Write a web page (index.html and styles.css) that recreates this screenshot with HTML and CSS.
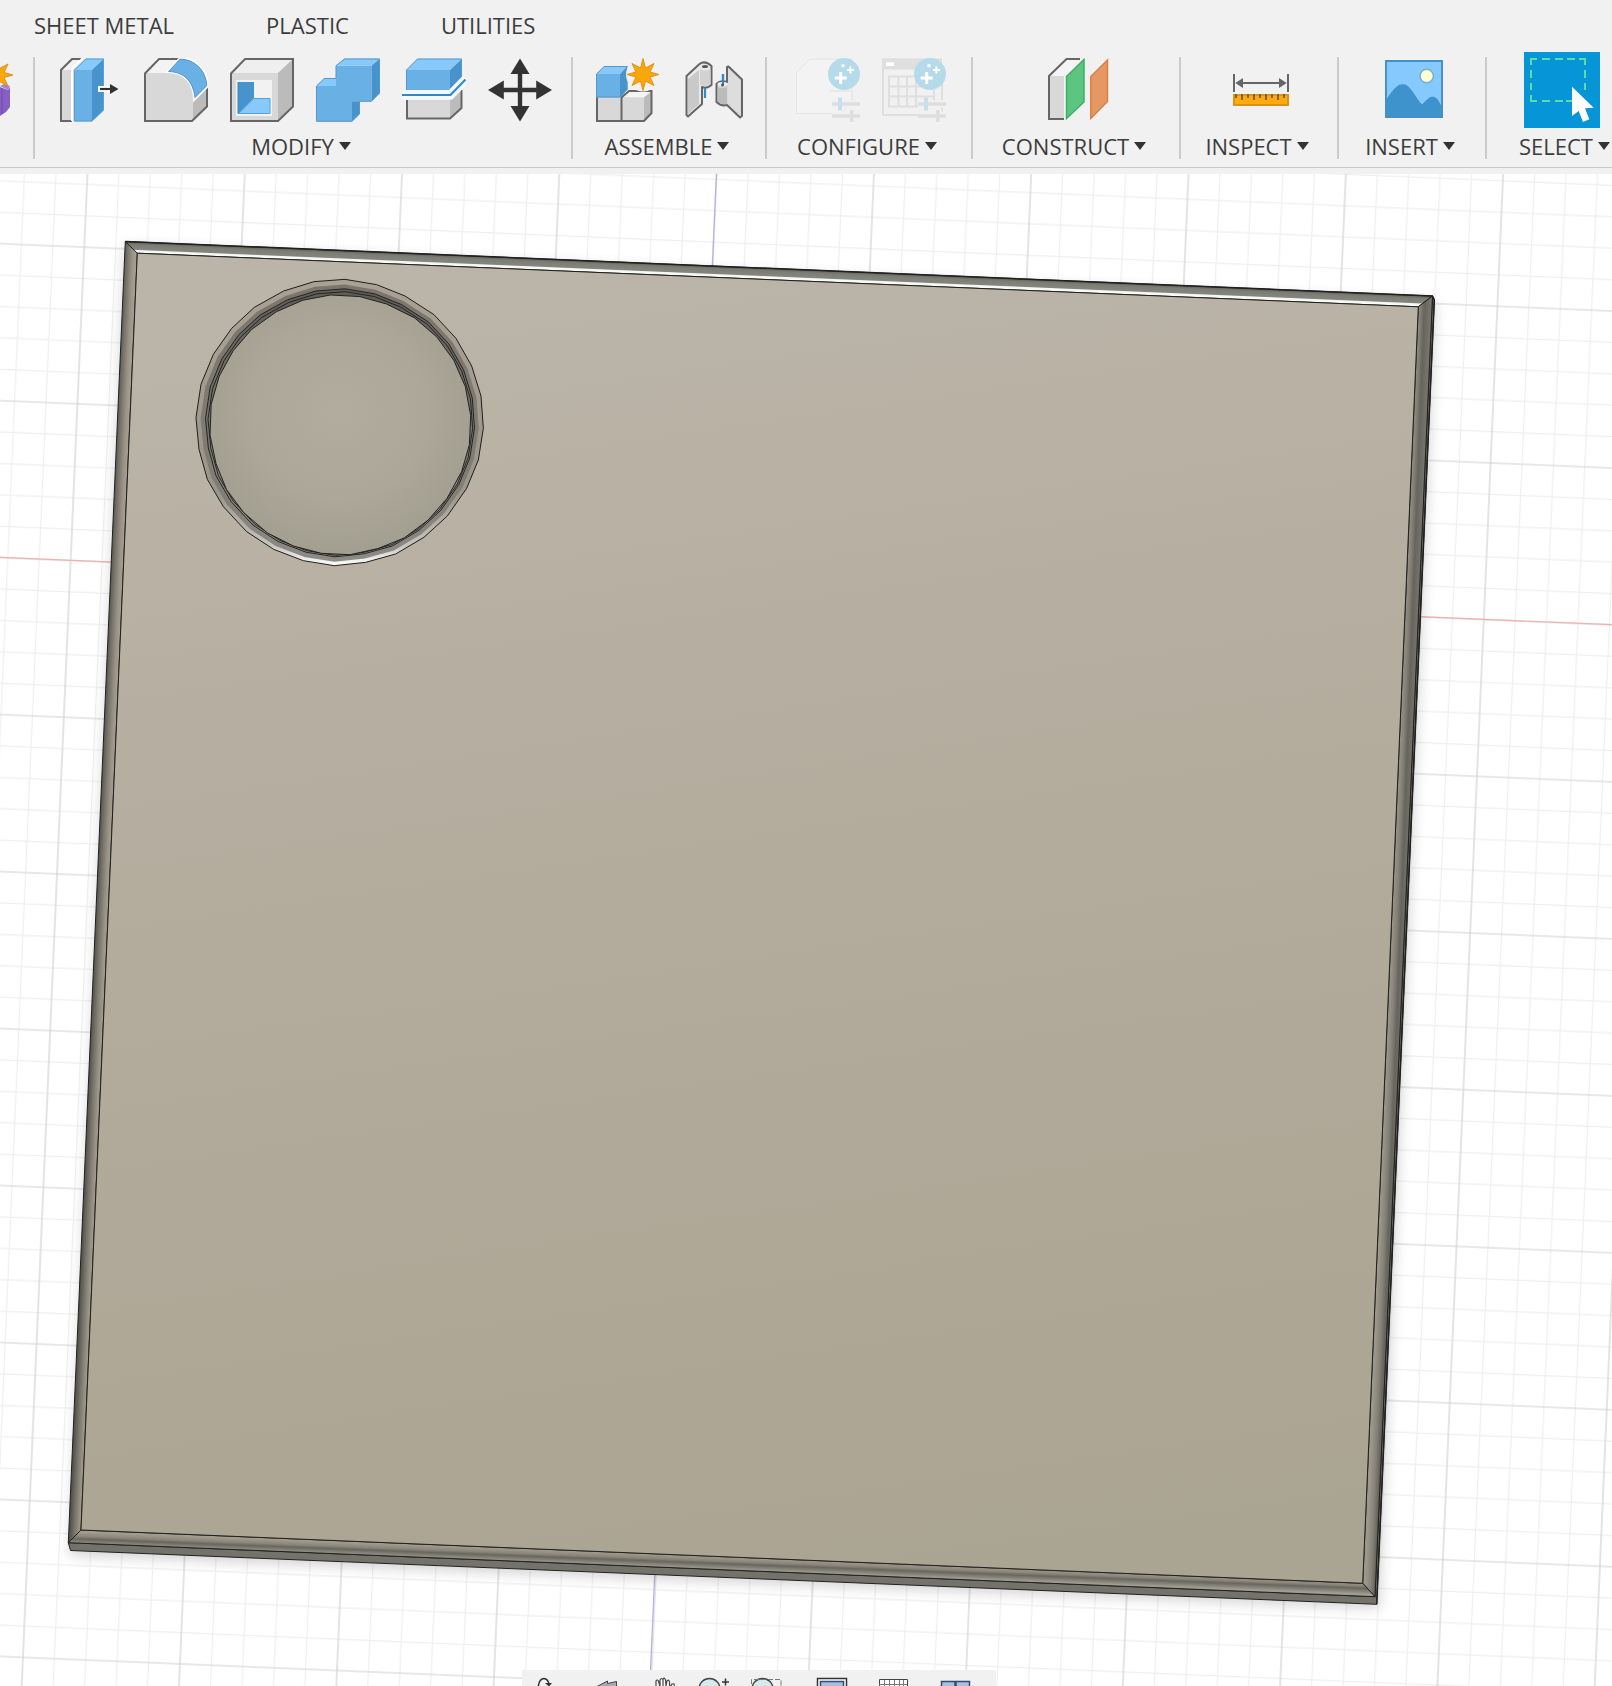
FILE: index.html
```html
<!DOCTYPE html>
<html lang="en">
<head>
<meta charset="utf-8">
<meta name="viewport" content="width=device-width, initial-scale=1">
<title>Solid modeling workspace</title>
<link rel="stylesheet" href="styles.css">
</head>
<body>
<svg class="defs" aria-hidden="true">
  <defs>
    <g id="sparkle-badge">
      <circle cx="48" cy="16" r="16" fill="#b5dbea"/>
      <path d="M44.7 14v12M38.7 20h12" stroke="#fff" stroke-width="3"/>
      <path d="M54.4 8.500v7M51 12h7" stroke="#fff" stroke-width="2"/>
      <circle cx="47" cy="7.700" r="1.800" fill="#fff"/>
      <path d="M36 46h28M36 58h28M55.800 52v12" stroke="#f1f1f1" stroke-width="8"/>
      <path d="M36 46h28M36 58h28M55.800 52v12" stroke="#dedede" stroke-width="3.500"/>
      <path d="M44 39.500v13" stroke="#c6dfea" stroke-width="4"/>
    </g>
    <path id="star" d="M0-16 2.500-6.500 11-11 7-2.500 16 0 7 2.500 11 11 2.500 6.500 0 16-2.500 6.500-11 11-7 2.500-16 0-7-2.500-11-11-2.500-6.500z" fill="#fba70b" stroke="#dd9412" stroke-width="1"/>
  </defs>
</svg>
<div class="app">
  <header class="toolbar">
    <nav class="tabs" aria-label="Workspace tabs">
      <button type="button">SHEET METAL</button>
      <button type="button">PLASTIC</button>
      <button type="button">UTILITIES</button>
    </nav>
    <div class="ribbon">
      <div class="clip">
        <svg viewBox="0 0 34 102" aria-hidden="true">
          <path d="M0 30 8 33 10 30v20L6 55 0 59z" fill="#8860c4"/>
          <path d="M2 31v26" stroke="#6f48aa"/>
          <path d="M0 29 8 33 10 29 4 27z" fill="#a583dd"/>
          <use href="#star" x="-3" y="18"/>
        </svg>
      </div>
      <section class="group">
        <div class="tools">
          <button type="button" aria-label="Press Pull"><svg viewBox="0 0 64 64">
            <path d="M2 12 14 1H26L16 12V63H2z" fill="#d8d8d8"/><path d="M4 12 15 2H25L15 12z" fill="#f2f2f2"/>
            <path d="M14 63H3V12L14 1H24" fill="none" stroke="#666" stroke-width="2"/>
            <path d="M14 63V11L25 0" fill="none" stroke="#fff" stroke-width="2"/>
            <path d="M16 12H34V63.500H16z" fill="#69b0e4"/><path d="M16 12 27.500.500H46L34 12z" fill="#88c9fb"/><path d="M34 12 46 .500V52L34 63.500z" fill="#4793cb"/>
            <path d="M16.500 12 28 1H45.500V52L34 63H16.500z" fill="none" stroke="#5a9fd2"/>
            <path d="M40 31H53" stroke="#fff" stroke-width="6"/><path d="M42 31H53" stroke="#333" stroke-width="2.200"/><path d="M52 26 60.500 31 52 36z" fill="#333"/>
          </svg></button>
          <button type="button" aria-label="Fillet"><svg viewBox="0 0 64 64">
            <path d="M1 15 15 1H35L63 28V49L48 63H1z" fill="#d8d8d8"/><path d="M2 15 15 2H35L25 15z" fill="#f3f3f3"/><path d="M49 40 63 28V49L49 62z" fill="#bbb"/>
            <path d="M35 1H15L1 15.500V63H48L63 48.500V29" fill="none" stroke="#666" stroke-width="2"/>
            <path d="M23 14 36 0C52 0 63 12 64 28L50 42C50 25 41 14 23 14z" fill="#69b0e4" stroke="#fff" stroke-width="2"/>
            <path d="M24.500 13.500 36 1.200C51 1.200 62 13 62.800 27.500L51 39.500C49 23 40 14 24.500 13.500z" fill="#69b0e4" stroke="#5597ca"/>
          </svg></button>
          <button type="button" aria-label="Shell"><svg viewBox="0 0 64 64">
            <path d="M1 15 15 1H63V49L48 63H1z" fill="#d8d8d8"/><path d="M2 15 15 2H62L48 15z" fill="#efefef"/><path d="M48 15 62 2V48.500L48 62z" fill="#bbb"/>
            <path d="M1 15.500 15 1H63V48.500L48 63H1z" fill="none" stroke="#666" stroke-width="2"/>
            <path d="M6 22H42V58H6z" fill="#f2f2f2"/><path d="M8 24H24V40L8 56z" fill="#4793cb"/><path d="M8.500 55.500H40V40.500H24z" fill="#88c9fb" stroke="#5a9fd2"/><path d="M8 24V55.500" stroke="#3e84bb"/>
          </svg></button>
          <button type="button" aria-label="Combine"><svg viewBox="0 0 64 64">
            <path d="M.500 28H20V7.700H55.500V43.300H36V63.300H.500z" fill="#69b0e4"/>
            <path d="M.500 28 8.200 20.300H20V28zM20 7.700 28.500.500H64L55.500 7.700z" fill="#88c9fb"/>
            <path d="M55.500 7.700 64 .500V35L55.500 43.300zM36 43.300H43.500V56L36 63.300z" fill="#4793cb"/>
            <path d="M.500 28 8.200 20.500H20V7.700L28.500 1H63.500V35L55.500 43.300H43.500V56L36 63.300H.500z" fill="none" stroke="#5597ca"/>
          </svg></button>
          <button type="button" aria-label="Split Body"><svg viewBox="0 0 64 64">
            <path d="M4.500 12H48V32H4.500z" fill="#69b0e4"/><path d="M4.500 12 15.500.700H60L48 12z" fill="#88c9fb"/><path d="M48 12 60 .700V20.700L48 32z" fill="#4793cb"/>
            <path d="M4.500 32V12L15.500 1H59.500V20.700" fill="none" stroke="#5597ca"/>
            <path d="M5 42H48V60.500H5z" fill="#d8d8d8"/><path d="M48 42 60 31V50L48 60.500z" fill="#bbb"/>
            <path d="M5 42V60.500H48L59.500 50V32" fill="none" stroke="#666" stroke-width="2"/>
            <path d="M0 37H48.500L64 21" fill="none" stroke="#f6f9fc" stroke-width="9"/><path d="M0 37H48.500L63.500 21.500" fill="none" stroke="#2e8acb" stroke-width="2.200"/>
          </svg></button>
          <button type="button" aria-label="Move/Copy"><svg viewBox="0 0 64 64">
            <path d="M32 14V50M14 32H50" stroke="#333" stroke-width="4.400"/>
            <path d="M32 .500 41.500 16H22.500zM32 63.500 41.500 48H22.500zM0 32 15.800 22.500V41.500zM64 32 48.200 22.500V41.500z" fill="#333"/>
          </svg></button>
        </div>
        <button type="button" class="menu">MODIFY<i class="arrow"></i></button>
      </section>
      <section class="group">
        <div class="tools">
          <button type="button" aria-label="New Component"><svg viewBox="0 0 64 64">
            <path d="M1 39H25L33 33H56V55L48 63H1z" fill="#d8d8d8"/><path d="M25 39 33 33H56L48 39.500z" fill="#f4f4f4"/><path d="M48 39.500 56 33V55L48 63z" fill="#bbb"/>
            <path d="M1 39V63H48L55.500 55V33H33L25.500 39.500V63" fill="none" stroke="#666" stroke-width="2"/>
            <path d="M0 16H24V39.500H0z" fill="#69b0e4"/><path d="M0 16 8.300 8H31.500L24 16z" fill="#88c9fb"/><path d="M24 16 31.500 8V31.300L24 39.500z" fill="#4793cb"/>
            <path d="M.500 39V16L8.300 8.500H31V31.300L24 39z" fill="none" stroke="#5597ca"/>
            <circle cx="47" cy="16.500" r="17" fill="#f1f1f1"/><use href="#star" x="47" y="16.500"/>
          </svg></button>
          <button type="button" aria-label="Joint"><svg viewBox="0 0 64 64" stroke-linejoin="round">
            <path d="M4.500 18 17.500 6Q23 2 29.500 8V27Q25 31 20 29V46L6 58.500 4.500 57z" fill="#e9e9e9" stroke="#666" stroke-width="2"/>
            <path d="M6 21 17 12V46L6 56z" fill="#c9c9c9"/><path d="M18 11Q23 14 28.500 11V26Q23 29.500 18 27z" fill="#d2d2d2"/>
            <ellipse cx="23" cy="8.500" rx="3" ry="1.500" fill="#555"/>
            <path d="M23 30V40M41 16V28" stroke="#2e8acb" stroke-width="2.200"/>
            <path d="M45 9 46.500 8.500 60 21.500V58L58 59.500 45 47Q39 48.500 34.500 44V26Q38 22 45 24z" fill="#d8d8d8" stroke="#666" stroke-width="2"/>
            <path d="M46 11 58 22V57L46 46z" fill="#ddd"/><path d="M35.500 29Q40 31 45 29V46Q39 47 35.500 43z" fill="#bbb"/>
            <ellipse cx="40.500" cy="26" rx="5" ry="2" fill="#f0f0f0"/><path d="M41 16V27" stroke="#2e8acb" stroke-width="2.200"/><circle cx="40.500" cy="27" r="1.500" fill="#555"/>
          </svg></button>
        </div>
        <button type="button" class="menu">ASSEMBLE<i class="arrow"></i></button>
      </section>
      <section class="group">
        <div class="tools">
          <button type="button" aria-label="Create Configuration" disabled><svg viewBox="0 0 64 64">
            <path d="M.500 14.500 14 1H56V44L45 55.500H.500z" fill="#f3f3f3" stroke="#e4e4e4"/><path d="M34 33h22v12" fill="none" stroke="#e8e8e8" stroke-width="2"/>
            <use href="#sparkle-badge"/>
          </svg></button>
          <button type="button" aria-label="Configuration Table" disabled><svg viewBox="0 0 64 64">
            <path d="M0 .300H60V11.500H0z" fill="#dfdfdf"/><path d="M4 4.300H12V8H4z" fill="#fff"/>
            <path d="M1 11V57H60V11" fill="none" stroke="#dfdfdf" stroke-width="2"/>
            <path d="M7 18.500H52V48.500H7zM7 28.500H52M7 38.500H52M16.500 18V48M25 18V48M34 18V48" fill="none" stroke="#dfdfdf" stroke-width="2"/>
            <use href="#sparkle-badge"/>
          </svg></button>
        </div>
        <button type="button" class="menu">CONFIGURE<i class="arrow"></i></button>
      </section>
      <section class="group">
        <div class="tools">
          <button type="button" aria-label="Offset Plane"><svg viewBox="0 0 64 64">
            <path d="M3 18 20 1H36L20 18V61H3z" fill="#f4f4f4"/><path d="M3 18H18V61H3z" fill="#d8d8d8"/>
            <path d="M18 61H3V18L20.500 1H34" fill="none" stroke="#666" stroke-width="2"/>
            <path d="M20.500 18.500 38 1.500V44L20.500 60.500z" fill="#5cc57f" stroke="#3fae67" stroke-width="1.500"/>
            <path d="M44.800 18.500 61.500 2V43.500L44.800 60.500z" fill="#e59863" stroke="#d88245" stroke-width="1.500"/>
          </svg></button>
        </div>
        <button type="button" class="menu">CONSTRUCT<i class="arrow"></i></button>
      </section>
      <section class="group">
        <div class="tools">
          <button type="button" aria-label="Measure"><svg viewBox="0 0 64 64">
            <path d="M5 16V34M59 16V34M10 25H54" stroke="#666" stroke-width="2"/><path d="M6.300 25 14 20V30zM57.700 25 50 20V30z" fill="#666"/>
            <path d="M5 37H59V47H5z" fill="#fbab0c" stroke="#dc9315" stroke-width="2"/>
            <path d="M7 36V40M13 36V42M19 36V40M25 36V42M31 36V40M37 36V42M43 36V40M49 36V42M55 36V40" stroke="#7d5a20" stroke-width="1.800"/>
          </svg></button>
        </div>
        <button type="button" class="menu">INSPECT<i class="arrow"></i></button>
      </section>
      <section class="group">
        <div class="tools">
          <button type="button" aria-label="Insert Canvas"><svg viewBox="0 0 64 64">
            <path d="M4 3H60V59H4z" fill="#85caff"/><path d="M4 42C13 28 17 26 21 26.300C28 26 33 39 40 46.500C46 40 48 38.500 51 38.700C55 39 57 43 60 49V59H4z" fill="#3f93cd"/>
            <path d="M4 3H60V59H4z" fill="none" stroke="#4690c6" stroke-width="2"/><circle cx="44.700" cy="18" r="6.700" fill="#ffffd2" stroke="#77b0cf" stroke-width="1.500"/>
          </svg></button>
        </div>
        <button type="button" class="menu">INSERT<i class="arrow"></i></button>
      </section>
      <section class="group select">
        <div class="tools">
          <button type="button" class="active" aria-label="Select" aria-pressed="true"><svg viewBox="0 0 76 76">
            <path d="M7 13V7H13M55 7H61V13M7 43V49H13M18 7H26M31 7H39M43 7H51M7 18V26M7 31V38M61 18V26M61 31V38M18 49H26M31 49H39M42 49H48" fill="none" stroke="#5fdba4" stroke-width="2"/>
            <path d="M48 34.700 69.700 55.700 61 56.300 65.300 67.300 59 70 54.700 59 48 64z" fill="#fff"/>
          </svg></button>
        </div>
        <button type="button" class="menu">SELECT<i class="arrow"></i></button>
      </section>
    </div>
  </header>
  <main class="viewport">
    <svg class="scene" viewBox="0 174 1612 1512" preserveAspectRatio="xMidYMin slice" role="img" aria-label="Square plate with a round pocket">
      <defs>
        <pattern id="grid" width="157" height="157" patternUnits="userSpaceOnUse" patternTransform="matrix(1.0001 .0418 -.04340 .9980 698.700 586.800)">
          <path d="M31.400 0V157M62.800 0V157M94.200 0V157M125.600 0V157M0 31.400H157M0 62.800H157M0 94.200H157M0 125.600H157" stroke="#efefef" stroke-width="1.200"/>
          <path d="M0 0V157M157 0V157M0 0H157M0 157H157" stroke="#d2d2d2" stroke-width="1.200"/>
        </pattern>
        <linearGradient id="face" gradientUnits="userSpaceOnUse" x1="640" y1="240" x2="840" y2="1600">
          <stop offset="0" stop-color="#bbb5a9"/><stop offset=".3" stop-color="#b6afa1"/><stop offset=".65" stop-color="#b0a999"/><stop offset="1" stop-color="#aaa492"/>
        </linearGradient>
        <linearGradient id="edge-left" gradientUnits="userSpaceOnUse" x1="97" y1="890" x2="109" y2="890.500">
          <stop offset="0" stop-color="#55534d"/><stop offset=".35" stop-color="#77746c"/><stop offset=".75" stop-color="#9b9486"/><stop offset="1" stop-color="#a59e90"/>
        </linearGradient>
        <linearGradient id="edge-right" gradientUnits="userSpaceOnUse" x1="1390.500" y1="940" x2="1406" y2="940.600">
          <stop offset="0" stop-color="#9d988b"/><stop offset=".35" stop-color="#858177"/><stop offset=".6" stop-color="#66645d"/><stop offset="1" stop-color="#77756c"/>
        </linearGradient>
        <linearGradient id="edge-top" gradientUnits="userSpaceOnUse" x1="778" y1="268" x2="777.500" y2="280">
          <stop offset="0" stop-color="#55564f"/><stop offset=".3" stop-color="#7c7d75"/><stop offset=".68" stop-color="#85857d"/><stop offset=".76" stop-color="#f4f4f2"/><stop offset="1" stop-color="#fff"/>
        </linearGradient>
        <linearGradient id="edge-bottom" gradientUnits="userSpaceOnUse" x1="722" y1="1556.500" x2="721.500" y2="1569.500">
          <stop offset="0" stop-color="#a39d8f"/><stop offset=".35" stop-color="#8b867a"/><stop offset=".55" stop-color="#68665e"/><stop offset="1" stop-color="#a19d93"/>
        </linearGradient>
        <linearGradient id="rim" x1="0" y1="0" x2="0" y2="1">
          <stop offset="0" stop-color="#aaa194"/><stop offset=".75" stop-color="#9b968a"/><stop offset=".93" stop-color="#c6c4bf"/><stop offset="1" stop-color="#fff"/>
        </linearGradient>
        <linearGradient id="groove" x1="0" y1="0" x2="0" y2="1">
          <stop offset="0" stop-color="#7b766d"/><stop offset=".75" stop-color="#827e75"/><stop offset="1" stop-color="#8d8b86"/>
        </linearGradient>
        <linearGradient id="wall" x1="0" y1="0" x2="0" y2="1">
          <stop offset="0" stop-color="#605d58"/><stop offset=".4" stop-color="#74716a"/><stop offset="1" stop-color="#929087"/>
        </linearGradient>
        <radialGradient id="floor" cx=".5" cy=".45" r=".55">
          <stop offset="0" stop-color="#b2ac9e"/><stop offset=".6" stop-color="#aca799"/><stop offset="1" stop-color="#a29e90"/>
        </radialGradient>
        <filter id="soft" x="-5%" y="-5%" width="110%" height="110%"><feGaussianBlur stdDeviation="7"/></filter>
        <polygon id="facets" points="735,178 830,194 915,228 1002,284 1068,355 1115,438 1143,528 1150,625 1135,720 1100,805 1042,888 972,952 887,1002 797,1027 703,1037 610,1022 521,988 440,935 370,860 322,778 297,688 288,593 303,493 340,403 395,325 463,262 551,213 642,185"/>
      </defs>
      <rect x="-1000" y="174" width="4000" height="3000" fill="#fff"/>
      <rect x="-1000" y="174" width="4000" height="3000" fill="url(#grid)"/>
      <path d="M716.400 174 649.800 1686" stroke="#b3b1e6" stroke-width="1.200"/>
      <path d="M0 557.300 1612 624.700" stroke="#efb0b0" stroke-width="1.200"/>
      <path d="M125 246 1435 302 1379 1608 70 1555z" fill="#000" opacity=".18" filter="url(#soft)"/>
      <g stroke="#20201e" stroke-width="1" stroke-linejoin="round">
        <path d="M68.300 1542.700 70.500 1550.500 1376.700 1604.300 1434.300 300 1432.500 296 1375 1596.700z" fill="#74736b"/>
        <path d="M125.300 241.500 137.300 253.200 81 1530 68.300 1542.700z" fill="url(#edge-left)"/>
        <path d="M125.300 241.500 1432.500 296 1418.300 306.800 137.300 253.200z" fill="url(#edge-top)"/>
        <path d="M1432.500 296 1375 1596.700 1362.700 1583.300 1418.300 306.800z" fill="url(#edge-right)"/>
        <path d="M68.300 1542.700 81 1530 1362.700 1583.300 1375 1596.700z" fill="url(#edge-bottom)"/>
        <path d="M137.300 253.200 1418.300 306.800 1362.700 1583.300 81 1530z" fill="url(#face)"/>
        <path d="M125.300 241.500 1432.500 296 1434.300 300 1376.700 1604.300" fill="none" stroke-width="1.500"/>
      </g>
      <g transform="translate(100 220) scale(.33333)" stroke="#1d1d1b" stroke-width="3">
        <use href="#facets" fill="url(#rim)"/>
        <use href="#facets" fill="url(#groove)" stroke="none" transform="translate(719 610) scale(.968) translate(-719 -608)"/>
        <use href="#facets" fill="url(#wall)" transform="translate(720 609) scale(.936) translate(-719 -608)"/>
        <use href="#facets" fill="url(#wall)" transform="translate(721 611) scale(.921) translate(-719 -608)"/>
        <use href="#facets" fill="url(#floor)" transform="translate(721 615) rotate(-6.400) scale(.909) translate(-719 -608)"/>
      </g>
    </svg>
    <nav class="navbar" aria-label="View navigation">
      <button type="button" aria-label="Orbit"><svg viewBox="0 0 32 32"><path d="M11 18Q12 8.500 17 8.500 21 9 22 14" fill="none" stroke="#333" stroke-width="1.500"/><path d="M18 13H25L22 16.500z" fill="#333"/></svg></button>
      <button type="button" aria-label="Look At"><svg viewBox="0 0 32 32"><path d="M5 16.500 15.500 11V13.500L24.500 11.500V21H8z" fill="#a9aaae" stroke="#444"/></svg></button>
      <button type="button" aria-label="Pan"><svg viewBox="0 0 32 32"><path d="M9 20V11Q10 9 11.500 11L13 17V10Q14.500 7 16 10V16 9Q17.500 7 18.500 10L19 16 20 11Q22 9 22.500 12V18L25 14Q28 13 27 16L22 26H13z" fill="#fff" stroke="#444" stroke-width="1.200"/></svg></button>
      <button type="button" aria-label="Zoom"><svg viewBox="0 0 32 32"><circle cx="12.500" cy="19" r="10.500" fill="#d5eaec" stroke="#444" stroke-width="1.500"/><path d="M25 12H32M28.500 8.500V15.500" stroke="#333" stroke-width="1.500"/></svg></button>
      <button type="button" aria-label="Fit"><svg viewBox="0 0 32 32"><circle cx="12.500" cy="19" r="10.500" fill="#d5eaec" stroke="#444" stroke-width="1.500"/><path d="M1.500 14V9.500H31V16" fill="none" stroke="#777" stroke-dasharray="5 2"/></svg></button>
      <button type="button" aria-label="Display Settings"><svg viewBox="0 0 32 32"><path d="M1.500 8.500H30.500V28H1.500z" fill="#fff" stroke="#333" stroke-width="1.500"/><path d="M4.500 11.500H27.500V25H4.500z" fill="#a6bfe2" stroke="#304d77" stroke-width="1.500"/></svg></button>
      <button type="button" aria-label="Grid and Snaps"><svg viewBox="0 0 32 32"><path d="M2.500 9.500H30.500V30H2.500z" fill="#fff" stroke="#444"/><path d="M2 14.500H30M7.500 10V30M12.500 10V30M17.500 10V30M22.500 10V30M26.500 10V30" stroke="#777"/></svg></button>
      <button type="button" aria-label="Viewports"><svg viewBox="0 0 32 32"><path d="M2.500 11.500H16V28H2.500zM17 11.500H30.500V28H17z" fill="#a6bfe2" stroke="#304d77" stroke-width="1.500"/></svg></button>
    </nav>
  </main>
</div>
</body>
</html>
```
FILE: styles.css
```css
* {
  box-sizing: border-box;
}

body {
  margin: 0;
  background: #fff;
  color: #3c3c3c;
  font-family: "Open Sans", "Noto Sans", sans-serif;
  font-size: 22px;
  font-weight: 500;
  line-height: 24px;
}

button {
  margin: 0;
  padding: 0;
  border: 0;
  background: none;
  color: inherit;
  font: inherit;
}

svg {
  display: block;
}

.defs {
  position: absolute;
  width: 0;
  height: 0;
}

.app {
  display: flex;
  flex-direction: column;
  height: 100vh;
  overflow: hidden;
}

.toolbar {
  flex: none;
  padding-bottom: 6px;
  background: #f1f1f1;
}

.tabs {
  display: flex;
  gap: 92px;
  padding: 13px 34px 20px;
}

.ribbon {
  display: grid;
  grid-template-columns: 33px 538fr 194fr 206fr 208fr 158fr 148fr 127fr;
  padding-bottom: 8px;
  border-bottom: 1px solid #c8c8c8;
}

.clip svg {
  width: 34px;
  height: 102px;
}

.group {
  display: flex;
  flex-direction: column;
  align-items: center;
  min-width: 0;
  border-left: 2px solid #cbcbcb;
}

.tools {
  display: flex;
  gap: 22px;
  align-items: center;
  height: 66px;
  padding-left: 4px;
}

.tools svg {
  width: 64px;
  height: 64px;
}

.tools .active {
  margin: -6px 0;
  background: #0696d7;
}

.tools .active svg {
  width: 76px;
  height: 76px;
}

.menu {
  display: flex;
  gap: 5px;
  align-items: center;
  padding: 11px 4px 1px 0;
  white-space: nowrap;
}

.arrow {
  border: 6px solid transparent;
  border-top: 8px solid #333;
  border-bottom: 0;
}

.select {
  align-items: flex-end;
}

.select .tools {
  padding-right: 12px;
}

.select .menu {
  padding-right: 2px;
}

.viewport {
  position: relative;
  flex: 1;
  min-height: 0;
}

.scene {
  width: 100%;
  height: 100%;
}

.navbar {
  position: absolute;
  bottom: 0;
  left: 32.4%;
  display: grid;
  grid-template-columns: 65px 55px 50px 53px 66px 61px 62px 57px;
  height: 16px;
  padding-left: 5px;
  overflow: hidden;
  background: #f1f1f1;
}

.navbar svg {
  width: 32px;
  height: 32px;
}
```
